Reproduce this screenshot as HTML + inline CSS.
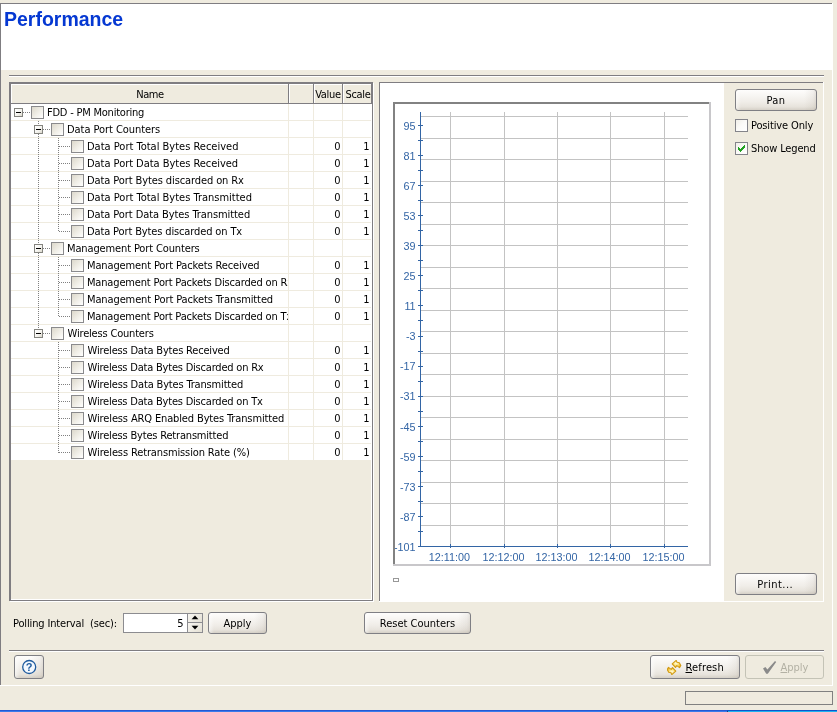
<!DOCTYPE html>
<html><head><meta charset="utf-8"><title>Performance</title>
<style>
html,body{margin:0;padding:0}
body{width:837px;height:712px;overflow:hidden;background:#efebdf;position:relative;font-family:"DejaVu Sans Condensed","Liberation Sans",sans-serif;font-size:11px;color:#000;line-height:13px}
#root{position:absolute;left:0;top:0;width:837px;height:712px;will-change:transform}
.a{position:absolute}
.t{position:absolute;white-space:nowrap;line-height:13px;height:13px}
.btn{position:absolute;box-sizing:border-box;border:1px solid #7f7f84;border-radius:3px;background:linear-gradient(to right,rgba(255,255,255,.55) 0,rgba(255,255,255,0) 5px,rgba(255,255,255,0) calc(100% - 12px),rgba(150,140,125,.10) calc(100% - 3px),rgba(150,140,125,.22) 100%),linear-gradient(to bottom,#fefdfc 0%,#f7f5f2 30%,#f0ede8 60%,#e7e3dc 84%,#d5d0c7 100%);text-align:center;white-space:nowrap}
.btn span{position:absolute;left:0;right:0;text-align:center;line-height:13px}
.cb{position:absolute;box-sizing:border-box;width:13px;height:13px;border:1px solid #8a8a8c;background:linear-gradient(135deg,#dcd8cb 0%,#f1efe8 55%,#ffffff 100%)}
.cb2{position:absolute;box-sizing:border-box;width:13px;height:13px;border:1px solid #84848a;background:linear-gradient(135deg,#f1efe9 0%,#fbfaf8 50%,#ffffff 100%)}
.ex{position:absolute;box-sizing:border-box;width:9px;height:9px;border:1px solid #84847f;background:linear-gradient(135deg,#ffffff 0%,#f4f3ee 60%,#dcd9cd 100%)}
.ex i{position:absolute;left:1px;top:3px;width:5px;height:1px;background:#000}
.hd{position:absolute;background:repeating-linear-gradient(to right,#808080 0,#808080 1px,transparent 1px,transparent 2px);height:1px}
.vd{position:absolute;background:repeating-linear-gradient(to bottom,#808080 0,#808080 1px,transparent 1px,transparent 2px);width:1px}
.gl{position:absolute;background:#efebdf}
u{text-decoration:underline}
</style></head>
<body>
<div id="root">
<div class="a" style="left:0px;top:3px;width:832px;height:1px;background:#7f7d81;"></div>
<div class="a" style="left:0px;top:3px;width:1px;height:683px;background:#7f7d81;"></div>
<div class="a" style="left:1px;top:4px;width:832px;height:66px;background:#fff;"></div>
<div class="a" style="left:832px;top:3px;width:1px;height:683px;background:#fff;"></div>
<div class="a" style="left:0px;top:685px;width:833px;height:1px;background:#fff;"></div>
<div class="t" style="left:4px;top:7px;font-family:'Liberation Sans',sans-serif;font-weight:bold;font-size:19.5px;line-height:24px;height:24px;color:#0538d2" id="title">Performance</div>
<div class="a" style="left:9px;top:75px;width:815px;height:1px;background:#7f7d81;"></div>
<div class="a" style="left:9px;top:76px;width:815px;height:1px;background:#fff;"></div>
<div class="a" style="left:9px;top:650px;width:815px;height:1px;background:#7f7d81;"></div>
<div class="a" style="left:9px;top:651px;width:815px;height:1px;background:#fff;"></div>
<div class="a" style="left:10px;top:83px;width:364px;height:519px;background:#fff;"></div>
<div class="a" style="left:9px;top:82px;width:364px;height:519px;background:#7f7d81;"></div>
<div class="a" style="left:10px;top:83px;width:362px;height:517px;background:#7f7d81;"></div>
<div class="a" style="left:11px;top:84px;width:361px;height:516px;background:#fff;"></div>
<div class="a" style="left:11px;top:84px;width:360px;height:515px;background:#efebdf;"></div>
<div class="a" style="left:11px;top:84px;width:278px;height:20px;background:#7f7d81;"></div>
<div class="a" style="left:11px;top:84px;width:277px;height:19px;background:#fff;"></div>
<div class="a" style="left:12px;top:85px;width:276px;height:18px;background:#efebdf;"></div>
<div class="a" style="left:289px;top:84px;width:25px;height:20px;background:#7f7d81;"></div>
<div class="a" style="left:289px;top:84px;width:24px;height:19px;background:#fff;"></div>
<div class="a" style="left:290px;top:85px;width:23px;height:18px;background:#efebdf;"></div>
<div class="a" style="left:314px;top:84px;width:29px;height:20px;background:#7f7d81;"></div>
<div class="a" style="left:314px;top:84px;width:28px;height:19px;background:#fff;"></div>
<div class="a" style="left:315px;top:85px;width:27px;height:18px;background:#efebdf;"></div>
<div class="a" style="left:343px;top:84px;width:29px;height:20px;background:#7f7d81;"></div>
<div class="a" style="left:343px;top:84px;width:28px;height:19px;background:#fff;"></div>
<div class="a" style="left:344px;top:85px;width:27px;height:18px;background:#efebdf;"></div>
<div class="t" id="hname" style="left:12px;width:276px;top:88px;text-align:center;letter-spacing:-0.45px">Name</div>
<div class="t" id="hvalue" style="left:314px;width:28px;top:88px;text-align:center;letter-spacing:-0.3px">Value</div>
<div class="t" id="hscale" style="left:344px;width:28px;top:88px;text-align:center;letter-spacing:-0.35px">Scale</div>
<div class="a" style="left:11px;top:104px;width:360px;height:356px;background:#fff;"></div>
<div class="gl" style="left:11px;top:120px;width:360px;height:1px"></div>
<div class="gl" style="left:11px;top:137px;width:360px;height:1px"></div>
<div class="gl" style="left:11px;top:154px;width:360px;height:1px"></div>
<div class="gl" style="left:11px;top:171px;width:360px;height:1px"></div>
<div class="gl" style="left:11px;top:188px;width:360px;height:1px"></div>
<div class="gl" style="left:11px;top:205px;width:360px;height:1px"></div>
<div class="gl" style="left:11px;top:222px;width:360px;height:1px"></div>
<div class="gl" style="left:11px;top:239px;width:360px;height:1px"></div>
<div class="gl" style="left:11px;top:256px;width:360px;height:1px"></div>
<div class="gl" style="left:11px;top:273px;width:360px;height:1px"></div>
<div class="gl" style="left:11px;top:290px;width:360px;height:1px"></div>
<div class="gl" style="left:11px;top:307px;width:360px;height:1px"></div>
<div class="gl" style="left:11px;top:324px;width:360px;height:1px"></div>
<div class="gl" style="left:11px;top:341px;width:360px;height:1px"></div>
<div class="gl" style="left:11px;top:358px;width:360px;height:1px"></div>
<div class="gl" style="left:11px;top:375px;width:360px;height:1px"></div>
<div class="gl" style="left:11px;top:392px;width:360px;height:1px"></div>
<div class="gl" style="left:11px;top:409px;width:360px;height:1px"></div>
<div class="gl" style="left:11px;top:426px;width:360px;height:1px"></div>
<div class="gl" style="left:11px;top:443px;width:360px;height:1px"></div>
<div class="gl" style="left:288px;top:104px;width:1px;height:356px"></div>
<div class="gl" style="left:313px;top:104px;width:1px;height:356px"></div>
<div class="gl" style="left:342px;top:104px;width:1px;height:356px"></div>
<div class="hd" style="left:23px;top:112px;width:8px"></div>
<div class="ex" style="left:14px;top:108px"><i></i></div>
<div class="cb" style="left:31px;top:106px"></div>
<div class="t" id="r0" style="left:47px;top:106px;width:241px;overflow:hidden;letter-spacing:-0.222px">FDD - PM Monitoring</div>
<div class="hd" style="left:43px;top:129px;width:8px"></div>
<div class="ex" style="left:34px;top:125px"><i></i></div>
<div class="cb" style="left:51px;top:123px"></div>
<div class="t" id="r1" style="left:67px;top:123px;width:221px;overflow:hidden;letter-spacing:-0.059px">Data Port Counters</div>
<div class="hd" style="left:59px;top:146px;width:12px"></div>
<div class="cb" style="left:71px;top:140px"></div>
<div class="t" id="r2" style="left:87px;top:140px;width:201px;overflow:hidden;letter-spacing:0.0px">Data Port Total Bytes Received</div>
<div class="t" style="left:314px;width:26.5px;top:140px;text-align:right">0</div>
<div class="t" style="left:343px;width:26.5px;top:140px;text-align:right">1</div>
<div class="hd" style="left:59px;top:163px;width:12px"></div>
<div class="cb" style="left:71px;top:157px"></div>
<div class="t" id="r3" style="left:87px;top:157px;width:201px;overflow:hidden;letter-spacing:-0.036px">Data Port Data Bytes Received</div>
<div class="t" style="left:314px;width:26.5px;top:157px;text-align:right">0</div>
<div class="t" style="left:343px;width:26.5px;top:157px;text-align:right">1</div>
<div class="hd" style="left:59px;top:180px;width:12px"></div>
<div class="cb" style="left:71px;top:174px"></div>
<div class="t" id="r4" style="left:87px;top:174px;width:201px;overflow:hidden;letter-spacing:-0.1px">Data Port Bytes discarded on Rx</div>
<div class="t" style="left:314px;width:26.5px;top:174px;text-align:right">0</div>
<div class="t" style="left:343px;width:26.5px;top:174px;text-align:right">1</div>
<div class="hd" style="left:59px;top:197px;width:12px"></div>
<div class="cb" style="left:71px;top:191px"></div>
<div class="t" id="r5" style="left:87px;top:191px;width:201px;overflow:hidden;letter-spacing:0.0px">Data Port Total Bytes Transmitted</div>
<div class="t" style="left:314px;width:26.5px;top:191px;text-align:right">0</div>
<div class="t" style="left:343px;width:26.5px;top:191px;text-align:right">1</div>
<div class="hd" style="left:59px;top:214px;width:12px"></div>
<div class="cb" style="left:71px;top:208px"></div>
<div class="t" id="r6" style="left:87px;top:208px;width:201px;overflow:hidden;letter-spacing:-0.081px">Data Port Data Bytes Transmitted</div>
<div class="t" style="left:314px;width:26.5px;top:208px;text-align:right">0</div>
<div class="t" style="left:343px;width:26.5px;top:208px;text-align:right">1</div>
<div class="hd" style="left:59px;top:231px;width:12px"></div>
<div class="cb" style="left:71px;top:225px"></div>
<div class="t" id="r7" style="left:87px;top:225px;width:201px;overflow:hidden;letter-spacing:-0.133px">Data Port Bytes discarded on Tx</div>
<div class="t" style="left:314px;width:26.5px;top:225px;text-align:right">0</div>
<div class="t" style="left:343px;width:26.5px;top:225px;text-align:right">1</div>
<div class="hd" style="left:43px;top:248px;width:8px"></div>
<div class="ex" style="left:34px;top:244px"><i></i></div>
<div class="cb" style="left:51px;top:242px"></div>
<div class="t" id="r8" style="left:67px;top:242px;width:221px;overflow:hidden;letter-spacing:-0.13px">Management Port Counters</div>
<div class="hd" style="left:59px;top:265px;width:12px"></div>
<div class="cb" style="left:71px;top:259px"></div>
<div class="t" id="r9" style="left:87px;top:259px;width:201px;overflow:hidden;letter-spacing:-0.129px">Management Port Packets Received</div>
<div class="t" style="left:314px;width:26.5px;top:259px;text-align:right">0</div>
<div class="t" style="left:343px;width:26.5px;top:259px;text-align:right">1</div>
<div class="hd" style="left:59px;top:282px;width:12px"></div>
<div class="cb" style="left:71px;top:276px"></div>
<div class="t" id="r10" style="left:87px;top:276px;width:201px;overflow:hidden;letter-spacing:-0.17px">Management Port Packets Discarded on Rx</div>
<div class="t" style="left:314px;width:26.5px;top:276px;text-align:right">0</div>
<div class="t" style="left:343px;width:26.5px;top:276px;text-align:right">1</div>
<div class="hd" style="left:59px;top:299px;width:12px"></div>
<div class="cb" style="left:71px;top:293px"></div>
<div class="t" id="r11" style="left:87px;top:293px;width:201px;overflow:hidden;letter-spacing:-0.118px">Management Port Packets Transmitted</div>
<div class="t" style="left:314px;width:26.5px;top:293px;text-align:right">0</div>
<div class="t" style="left:343px;width:26.5px;top:293px;text-align:right">1</div>
<div class="hd" style="left:59px;top:316px;width:12px"></div>
<div class="cb" style="left:71px;top:310px"></div>
<div class="t" id="r12" style="left:87px;top:310px;width:201px;overflow:hidden;letter-spacing:-0.17px">Management Port Packets Discarded on Tx</div>
<div class="t" style="left:314px;width:26.5px;top:310px;text-align:right">0</div>
<div class="t" style="left:343px;width:26.5px;top:310px;text-align:right">1</div>
<div class="hd" style="left:43px;top:333px;width:8px"></div>
<div class="ex" style="left:34px;top:329px"><i></i></div>
<div class="cb" style="left:51px;top:327px"></div>
<div class="t" id="r13" style="left:67.6px;top:327px;width:220px;overflow:hidden;letter-spacing:-0.188px">Wireless Counters</div>
<div class="hd" style="left:59px;top:350px;width:12px"></div>
<div class="cb" style="left:71px;top:344px"></div>
<div class="t" id="r14" style="left:87.6px;top:344px;width:200px;overflow:hidden;letter-spacing:-0.185px">Wireless Data Bytes Received</div>
<div class="t" style="left:314px;width:26.5px;top:344px;text-align:right">0</div>
<div class="t" style="left:343px;width:26.5px;top:344px;text-align:right">1</div>
<div class="hd" style="left:59px;top:367px;width:12px"></div>
<div class="cb" style="left:71px;top:361px"></div>
<div class="t" id="r15" style="left:87.6px;top:361px;width:200px;overflow:hidden;letter-spacing:-0.206px">Wireless Data Bytes Discarded on Rx</div>
<div class="t" style="left:314px;width:26.5px;top:361px;text-align:right">0</div>
<div class="t" style="left:343px;width:26.5px;top:361px;text-align:right">1</div>
<div class="hd" style="left:59px;top:384px;width:12px"></div>
<div class="cb" style="left:71px;top:378px"></div>
<div class="t" id="r16" style="left:87.6px;top:378px;width:200px;overflow:hidden;letter-spacing:-0.167px">Wireless Data Bytes Transmitted</div>
<div class="t" style="left:314px;width:26.5px;top:378px;text-align:right">0</div>
<div class="t" style="left:343px;width:26.5px;top:378px;text-align:right">1</div>
<div class="hd" style="left:59px;top:401px;width:12px"></div>
<div class="cb" style="left:71px;top:395px"></div>
<div class="t" id="r17" style="left:87.6px;top:395px;width:200px;overflow:hidden;letter-spacing:-0.206px">Wireless Data Bytes Discarded on Tx</div>
<div class="t" style="left:314px;width:26.5px;top:395px;text-align:right">0</div>
<div class="t" style="left:343px;width:26.5px;top:395px;text-align:right">1</div>
<div class="hd" style="left:59px;top:418px;width:12px"></div>
<div class="cb" style="left:71px;top:412px"></div>
<div class="t" id="r18" style="left:87.6px;top:412px;width:200px;overflow:hidden;letter-spacing:-0.135px">Wireless ARQ Enabled Bytes Transmitted</div>
<div class="t" style="left:314px;width:26.5px;top:412px;text-align:right">0</div>
<div class="t" style="left:343px;width:26.5px;top:412px;text-align:right">1</div>
<div class="hd" style="left:59px;top:435px;width:12px"></div>
<div class="cb" style="left:71px;top:429px"></div>
<div class="t" id="r19" style="left:87.6px;top:429px;width:200px;overflow:hidden;letter-spacing:-0.185px">Wireless Bytes Retransmitted</div>
<div class="t" style="left:314px;width:26.5px;top:429px;text-align:right">0</div>
<div class="t" style="left:343px;width:26.5px;top:429px;text-align:right">1</div>
<div class="hd" style="left:59px;top:452px;width:12px"></div>
<div class="cb" style="left:71px;top:446px"></div>
<div class="t" id="r20" style="left:87.6px;top:446px;width:200px;overflow:hidden;letter-spacing:-0.129px">Wireless Retransmission Rate (%)</div>
<div class="t" style="left:314px;width:26.5px;top:446px;text-align:right">0</div>
<div class="t" style="left:343px;width:26.5px;top:446px;text-align:right">1</div>
<div class="vd" style="left:38px;top:121px;height:4px"></div>
<div class="vd" style="left:38px;top:134px;height:110px"></div>
<div class="vd" style="left:38px;top:134px;height:110px"></div>
<div class="vd" style="left:38px;top:253px;height:76px"></div>
<div class="vd" style="left:58px;top:138px;height:94px"></div>
<div class="vd" style="left:58px;top:257px;height:60px"></div>
<div class="vd" style="left:58px;top:342px;height:111px"></div>
<div class="a" style="left:379px;top:82px;width:445px;height:520px;background:#fff;"></div>
<div class="a" style="left:379px;top:82px;width:444px;height:519px;background:#7f7d81;"></div>
<div class="a" style="left:380px;top:83px;width:443px;height:518px;background:#efebdf;"></div>
<div class="a" style="left:380px;top:83px;width:344px;height:518px;background:#fff;"></div>
<div class="a" style="left:393px;top:102px;width:318px;height:464px;background:#c8c7ca;"></div>
<div class="a" style="left:393px;top:102px;width:316px;height:462px;background:#828282;"></div>
<div class="a" style="left:395px;top:104px;width:314px;height:460px;background:#fff;"></div>
<svg class="a" style="left:395px;top:104px" width="314" height="460" viewBox="395 104 314 460" shape-rendering="crispEdges"><rect x="421" y="116" width="267" height="1" fill="#c3c3c3"/><rect x="421" y="138" width="267" height="1" fill="#c3c3c3"/><rect x="421" y="159" width="267" height="1" fill="#c3c3c3"/><rect x="421" y="181" width="267" height="1" fill="#c3c3c3"/><rect x="421" y="202" width="267" height="1" fill="#c3c3c3"/><rect x="421" y="224" width="267" height="1" fill="#c3c3c3"/><rect x="421" y="245" width="267" height="1" fill="#c3c3c3"/><rect x="421" y="267" width="267" height="1" fill="#c3c3c3"/><rect x="421" y="288" width="267" height="1" fill="#c3c3c3"/><rect x="421" y="310" width="267" height="1" fill="#c3c3c3"/><rect x="421" y="331" width="267" height="1" fill="#c3c3c3"/><rect x="421" y="353" width="267" height="1" fill="#c3c3c3"/><rect x="421" y="374" width="267" height="1" fill="#c3c3c3"/><rect x="421" y="396" width="267" height="1" fill="#c3c3c3"/><rect x="421" y="417" width="267" height="1" fill="#c3c3c3"/><rect x="421" y="439" width="267" height="1" fill="#c3c3c3"/><rect x="421" y="460" width="267" height="1" fill="#c3c3c3"/><rect x="421" y="482" width="267" height="1" fill="#c3c3c3"/><rect x="421" y="503" width="267" height="1" fill="#c3c3c3"/><rect x="421" y="525" width="267" height="1" fill="#c3c3c3"/><rect x="450" y="112" width="1" height="434" fill="#c3c3c3"/><rect x="504" y="112" width="1" height="434" fill="#c3c3c3"/><rect x="557" y="112" width="1" height="434" fill="#c3c3c3"/><rect x="610" y="112" width="1" height="434" fill="#c3c3c3"/><rect x="664" y="112" width="1" height="434" fill="#c3c3c3"/><rect x="420" y="112" width="1" height="435" fill="#3365a5"/><rect x="418" y="546" width="270" height="1" fill="#3365a5"/><rect x="418" y="125" width="5" height="1" fill="#3365a5"/><rect x="418" y="140" width="5" height="1" fill="#3365a5"/><rect x="418" y="155" width="5" height="1" fill="#3365a5"/><rect x="418" y="170" width="5" height="1" fill="#3365a5"/><rect x="418" y="185" width="5" height="1" fill="#3365a5"/><rect x="418" y="200" width="5" height="1" fill="#3365a5"/><rect x="418" y="215" width="5" height="1" fill="#3365a5"/><rect x="418" y="230" width="5" height="1" fill="#3365a5"/><rect x="418" y="245" width="5" height="1" fill="#3365a5"/><rect x="418" y="260" width="5" height="1" fill="#3365a5"/><rect x="418" y="275" width="5" height="1" fill="#3365a5"/><rect x="418" y="290" width="5" height="1" fill="#3365a5"/><rect x="418" y="305" width="5" height="1" fill="#3365a5"/><rect x="418" y="320" width="5" height="1" fill="#3365a5"/><rect x="418" y="336" width="5" height="1" fill="#3365a5"/><rect x="418" y="351" width="5" height="1" fill="#3365a5"/><rect x="418" y="366" width="5" height="1" fill="#3365a5"/><rect x="418" y="381" width="5" height="1" fill="#3365a5"/><rect x="418" y="396" width="5" height="1" fill="#3365a5"/><rect x="418" y="411" width="5" height="1" fill="#3365a5"/><rect x="418" y="426" width="5" height="1" fill="#3365a5"/><rect x="418" y="441" width="5" height="1" fill="#3365a5"/><rect x="418" y="456" width="5" height="1" fill="#3365a5"/><rect x="418" y="471" width="5" height="1" fill="#3365a5"/><rect x="418" y="486" width="5" height="1" fill="#3365a5"/><rect x="418" y="501" width="5" height="1" fill="#3365a5"/><rect x="418" y="516" width="5" height="1" fill="#3365a5"/><rect x="418" y="531" width="5" height="1" fill="#3365a5"/><rect x="418" y="546" width="5" height="1" fill="#3365a5"/><rect x="450" y="544" width="1" height="4" fill="#3365a5"/><rect x="504" y="544" width="1" height="4" fill="#3365a5"/><rect x="557" y="544" width="1" height="4" fill="#3365a5"/><rect x="610" y="544" width="1" height="4" fill="#3365a5"/><rect x="664" y="544" width="1" height="4" fill="#3365a5"/><g font-family="Liberation Sans, sans-serif" font-size="10.8" fill="#3365a5" shape-rendering="auto"><text x="415.6" y="129.8" text-anchor="end">95</text><text x="415.6" y="159.9" text-anchor="end">81</text><text x="415.6" y="189.9" text-anchor="end">67</text><text x="415.6" y="220.0" text-anchor="end">53</text><text x="415.6" y="250.1" text-anchor="end">39</text><text x="415.6" y="280.2" text-anchor="end">25</text><text x="415.6" y="310.2" text-anchor="end">11</text><text x="415.6" y="340.3" text-anchor="end">-3</text><text x="415.6" y="370.4" text-anchor="end">-17</text><text x="415.6" y="400.4" text-anchor="end">-31</text><text x="415.6" y="430.5" text-anchor="end">-45</text><text x="415.6" y="460.6" text-anchor="end">-59</text><text x="415.6" y="490.6" text-anchor="end">-73</text><text x="415.6" y="520.7" text-anchor="end">-87</text><text x="415.6" y="550.8" text-anchor="end">-101</text><text x="449.4" y="561" text-anchor="middle">12:11:00</text><text x="503.4" y="561" text-anchor="middle">12:12:00</text><text x="556.4" y="561" text-anchor="middle">12:13:00</text><text x="609.4" y="561" text-anchor="middle">12:14:00</text><text x="663.4" y="561" text-anchor="middle">12:15:00</text></g></svg>
<div class="a" style="left:393px;top:578px;width:6px;height:4px;background:#989898;"></div>
<div class="a" style="left:394px;top:579px;width:4px;height:2px;background:#fff;"></div>
<div class="btn" id="bpan" style="left:735px;top:89px;width:82px;height:22px;letter-spacing:0.4px"><span style="top:4px">Pan</span></div>
<div class="btn" id="bprint" style="left:735px;top:573px;width:82px;height:22px;letter-spacing:0.45px;text-indent:-1.5px"><span style="top:4px">Print...</span></div>
<div class="btn" id="bapply" style="left:208px;top:612px;width:59px;height:22px;"><span style="top:4px">Apply</span></div>
<div class="btn" id="breset" style="left:364px;top:612px;width:107px;height:22px;"><span style="top:4px">Reset Counters</span></div>
<div class="cb2" style="left:735px;top:119px"></div>
<div class="t" id="lpos" style="left:751px;top:119px;letter-spacing:-0.14px">Positive Only</div>
<div class="cb2" style="left:735px;top:142px"><svg class="a" style="left:0;top:0" width="11" height="11" viewBox="0 0 11 11" shape-rendering="crispEdges"><g fill="#22a222"><rect x="2" y="4" width="1" height="3"/><rect x="3" y="5" width="1" height="3"/><rect x="4" y="6" width="1" height="3"/><rect x="5" y="5" width="1" height="3"/><rect x="6" y="4" width="1" height="3"/><rect x="7" y="3" width="1" height="3"/><rect x="8" y="2" width="1" height="3"/></g></svg></div>
<div class="t" id="lshow" style="left:751px;top:142px;letter-spacing:-0.14px">Show Legend</div>
<div class="t" id="lpoll" style="left:13px;top:617px;white-space:pre;letter-spacing:-0.15px">Polling Interval  (sec):</div>
<div class="a" style="left:123px;top:613px;width:80px;height:20px;background:#8c8c90;"></div>
<div class="a" style="left:124px;top:614px;width:63px;height:18px;background:#fff;"></div>
<div class="t" id="spin5" style="left:124px;width:59.6px;top:617px;text-align:right">5</div>
<div class="a" style="left:188px;top:614px;width:14px;height:8px;background:linear-gradient(135deg,#f8f6f1,#e4e0d4);"></div>
<div class="a" style="left:188px;top:623px;width:14px;height:9px;background:linear-gradient(135deg,#f8f6f1,#e4e0d4);"></div>
<svg class="a" style="left:188px;top:613px" width="15" height="20" viewBox="188 613 15 20"><path d="M191.6 619.2 L195 615.6 L198.4 619.2 Z" fill="#000"/><path d="M191.6 625.8 L195 629.4 L198.4 625.8 Z" fill="#000"/></svg>
<div class="btn" style="left:14px;top:655px;width:30px;height:24px"></div>
<svg class="a" style="left:20px;top:658px" width="18" height="18" viewBox="20 658 18 18"><circle cx="29.2" cy="667" r="6.5" fill="#f3f8fe" stroke="#1f5b9e" stroke-width="1.3"/><text id="qm" x="29.2" y="671" text-anchor="middle" font-family="Liberation Sans, sans-serif" font-weight="bold" font-size="11" fill="#1f5b9e">?</text></svg>
<div class="btn" style="left:650px;top:655px;width:90px;height:24px"></div>
<div class="t" id="lref" style="left:685.5px;top:661px;letter-spacing:0.15px"><u>R</u>efresh</div>
<svg class="a" style="left:667px;top:660px" width="15" height="15" viewBox="0 0 15 15"><defs><radialGradient id="gy" cx="0.45" cy="0.4" r="0.6"><stop offset="0" stop-color="#fffbe0"/><stop offset="0.5" stop-color="#fde27a"/><stop offset="1" stop-color="#f0b428"/></radialGradient></defs><g fill="url(#gy)" stroke="#d19a14" stroke-width="1.1" stroke-linejoin="round"><path d="M9.2 0.4 L5.2 3.9 L8.5 7.4 L9.8 5.6 L12.5 7.6 L13.8 5.4 L12.3 2.8 L10 2.3 Z"/><path d="M9.2 0.4 L5.2 3.9 L8.5 7.4 L9.8 5.6 L12.5 7.6 L13.8 5.4 L12.3 2.8 L10 2.3 Z" transform="rotate(180 7 7.5)"/></g></svg>
<div class="a" style="left:745px;top:655px;width:79px;height:24px;box-sizing:border-box;border:1px solid #c4c3b6;border-radius:3px;background:#efebdf"></div>
<div class="t" id="lapp2" style="left:780.5px;top:661px;color:#b3b1a4"><u>A</u>pply</div>
<svg class="a" style="left:762px;top:660px" width="16" height="15" viewBox="762 660 16 15"><path d="M763 668.6 L765.4 667 L767.4 669.6 L775 661 L776.2 662 L767.8 673.8 L766.2 673.8 Z" fill="#8a8a8a"/></svg>
<div class="a" style="left:685px;top:691px;width:148px;height:14px;background:#808080;"></div>
<div class="a" style="left:686px;top:692px;width:146px;height:12px;background:#efebdf;"></div>
<div class="a" style="left:0px;top:710px;width:727px;height:1px;background:#2458d4;"></div>
<div class="a" style="left:727px;top:710px;width:110px;height:1px;background:#0c55cc;"></div>
<div class="a" style="left:0px;top:711px;width:727px;height:1px;background:#3b7bea;"></div>
<div class="a" style="left:727px;top:711px;width:1px;height:1px;background:#1d3a78;"></div>
<div class="a" style="left:728px;top:711px;width:109px;height:1px;background:#1fb2ee;"></div>
</div>
</body></html>
